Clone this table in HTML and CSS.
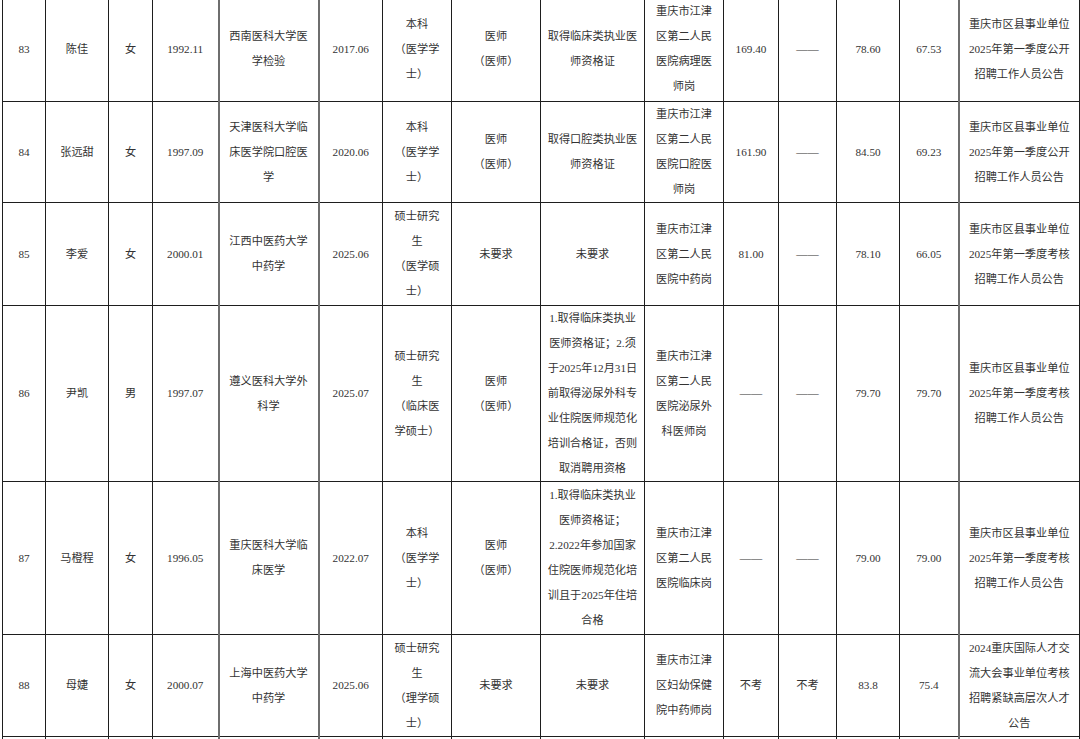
FILE: index.html
```html
<!DOCTYPE html>
<html lang="zh-CN">
<head>
<meta charset="utf-8">
<title>招聘人员名单</title>
<link rel="stylesheet" href="styles.css">
</head>
<body>
<table class="list">
  <colgroup>
    <col class="c1"><col class="c2"><col class="c3"><col class="c4"><col class="c5">
    <col class="c6"><col class="c7"><col class="c8"><col class="c9"><col class="c10">
    <col class="c11"><col class="c12"><col class="c13"><col class="c14"><col class="c15">
  </colgroup>
  <tbody>
    <tr class="r83">
      <td>83</td><td>陈佳</td><td>女</td><td>1992.11</td>
      <td class="wide">西南医科大学医<br>学检验</td><td>2017.06</td>
      <td>本科<br>（医学学<br>士）</td><td>医师<br>（医师）</td>
      <td>取得临床类执业医<br>师资格证</td>
      <td>重庆市江津<br>区第二人民<br>医院病理医<br>师岗</td>
      <td>169.40</td><td>——</td><td>78.60</td><td class="gr">67.53</td>
      <td class="gl">重庆市区县事业单位<br>2025年第一季度公开<br>招聘工作人员公告</td>
    </tr>
    <tr class="r84">
      <td>84</td><td>张远甜</td><td>女</td><td>1997.09</td>
      <td class="wide">天津医科大学临<br>床医学院口腔医<br>学</td><td>2020.06</td>
      <td>本科<br>（医学学<br>士）</td><td>医师<br>（医师）</td>
      <td>取得口腔类执业医<br>师资格证</td>
      <td>重庆市江津<br>区第二人民<br>医院口腔医<br>师岗</td>
      <td>161.90</td><td>——</td><td>84.50</td><td class="gr">69.23</td>
      <td class="gl">重庆市区县事业单位<br>2025年第一季度公开<br>招聘工作人员公告</td>
    </tr>
    <tr class="r85">
      <td>85</td><td>李爱</td><td>女</td><td>2000.01</td>
      <td class="wide">江西中医药大学<br>中药学</td><td>2025.06</td>
      <td>硕士研究<br>生<br>（医学硕<br>士）</td><td>未要求</td>
      <td>未要求</td>
      <td>重庆市江津<br>区第二人民<br>医院中药岗</td>
      <td>81.00</td><td>——</td><td>78.10</td><td class="gr">66.05</td>
      <td class="gl">重庆市区县事业单位<br>2025年第一季度考核<br>招聘工作人员公告</td>
    </tr>
    <tr class="r86">
      <td>86</td><td>尹凯</td><td>男</td><td>1997.07</td>
      <td class="wide">遵义医科大学外<br>科学</td><td>2025.07</td>
      <td>硕士研究<br>生<br>（临床医<br>学硕士）</td><td>医师<br>（医师）</td>
      <td>1.取得临床类执业<br>医师资格证；2.须<br>于2025年12月31日<br>前取得泌尿外科专<br>业住院医师规范化<br>培训合格证，否则<br>取消聘用资格</td>
      <td>重庆市江津<br>区第二人民<br>医院泌尿外<br>科医师岗</td>
      <td>——</td><td>——</td><td>79.70</td><td class="gr">79.70</td>
      <td class="gl">重庆市区县事业单位<br>2025年第一季度考核<br>招聘工作人员公告</td>
    </tr>
    <tr class="r87">
      <td>87</td><td>马橙程</td><td>女</td><td>1996.05</td>
      <td class="wide">重庆医科大学临<br>床医学</td><td>2022.07</td>
      <td>本科<br>（医学学<br>士）</td><td>医师<br>（医师）</td>
      <td>1.取得临床类执业<br>医师资格证；<br>2.2022年参加国家<br>住院医师规范化培<br>训且于2025年住培<br>合格</td>
      <td>重庆市江津<br>区第二人民<br>医院临床岗</td>
      <td>——</td><td>——</td><td>79.00</td><td class="gr">79.00</td>
      <td class="gl">重庆市区县事业单位<br>2025年第一季度考核<br>招聘工作人员公告</td>
    </tr>
    <tr class="r88">
      <td>88</td><td>母婕</td><td>女</td><td>2000.07</td>
      <td class="wide">上海中医药大学<br>中药学</td><td>2025.06</td>
      <td>硕士研究<br>生<br>（理学硕<br>士）</td><td>未要求</td>
      <td>未要求</td>
      <td>重庆市江津<br>区妇幼保健<br>院中药师岗</td>
      <td>不考</td><td>不考</td><td>83.8</td><td class="gr">75.4</td>
      <td class="gl">2024重庆国际人才交<br>流大会事业单位考核<br>招聘紧缺高层次人才<br>公告</td>
    </tr>
    <tr class="next">
      <td></td><td></td><td></td><td></td><td class="wide"></td><td></td><td></td><td></td>
      <td></td><td></td><td></td><td></td><td></td><td class="gr"></td><td class="gl"></td>
    </tr>
  </tbody>
</table>
</body>
</html>
```

FILE: styles.css
```css
html, body {
  margin: 0;
  padding: 0;
  background: #ffffff;
}

body {
  overflow: hidden;
}

.list {
  margin: -4px 0 0 2px;
  width: 1077px;
  table-layout: fixed;
  border-collapse: collapse;
  font-family: "Liberation Serif", "Noto Sans CJK SC", serif;
  font-size: 11.2px;
  line-height: 25px;
  color: #333333;
}

.c1 { width: 43px; }
.c2 { width: 63px; }
.c3 { width: 44px; }
.c4 { width: 66px; }
.c5 { width: 100px; }
.c6 { width: 64px; }
.c7 { width: 69px; }
.c8 { width: 89px; }
.c9 { width: 104px; }
.c10 { width: 79px; }
.c11 { width: 55px; }
.c12 { width: 58px; }
.c13 { width: 63px; }
.c14 { width: 59px; }
.c15 { width: 121px; }

.list td {
  border: 1px solid #1e1e1e;
  padding: 0;
  text-align: center;
  vertical-align: middle;
  white-space: nowrap;
  overflow: hidden;
}

.list td.wide {
  border-left: 2px solid #6e6e6e;
  border-right: 2px solid #6e6e6e;
}

.list td.gr {
  border-right: 2px solid #6e6e6e;
}

.list td.gl {
  border-left: 2px solid #6e6e6e;
}

.list tr.r83 { height: 105px; }
.list tr.r84 { height: 99px; }
.list tr.r85 { height: 103px; }
.list tr.r86 { height: 176px; }
.list tr.r87 { height: 153px; }
.list tr.r88 { height: 102px; }
.list tr.next { height: 30px; }
```
